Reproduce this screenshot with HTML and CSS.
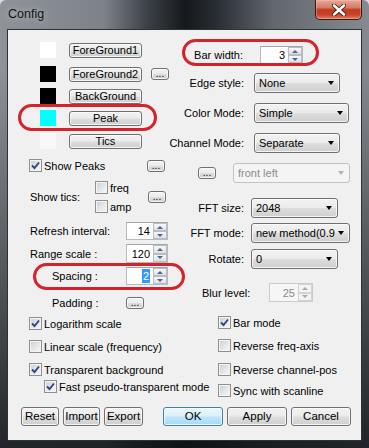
FILE: index.html
```html
<!DOCTYPE html>
<html lang="en">
<head>
    <meta charset="UTF-8">
    <title>Config</title>
    <link rel="stylesheet" href="styles.css">
</head>
<body>
    <div class="window">
        <div class="titlebar">
            <span class="title">Config</span>
            <div class="close-button">
                <svg width="14" height="12" viewBox="0 0 14 12">
                    <path d="M2 1.5 L12 10.5 M12 1.5 L2 10.5" stroke="#3a1208" stroke-width="4.2" stroke-linecap="round"/>
                    <path d="M2 1.5 L12 10.5 M12 1.5 L2 10.5" stroke="#ffffff" stroke-width="2.6" stroke-linecap="round"/>
                </svg>
            </div>
        </div>

        <div class="client">
            <div class="columns">
                <!-- left side: colours, peaks, scales -->
                <div class="col col-left">
                    <div class="row color-row">
                        <span class="swatch sw-fg1"></span>
                        <div class="btn color-btn">ForeGround1</div>
                    </div>
                    <div class="row color-row mt8">
                        <span class="swatch sw-fg2"></span>
                        <div class="btn color-btn">ForeGround2</div>
                        <div class="btn dots">...</div>
                    </div>
                    <div class="row color-row mt6">
                        <span class="swatch sw-bg"></span>
                        <div class="btn color-btn">BackGround</div>
                    </div>
                    <div class="row color-row mt6">
                        <span class="swatch sw-peak"></span>
                        <div class="btn color-btn">Peak</div>
                    </div>
                    <div class="row color-row mt7">
                        <span class="swatch sw-tics"></span>
                        <div class="btn color-btn">Tics</div>
                    </div>

                    <div class="row check-row show-peaks mt10">
                        <label class="check-label peaks-label">
                            <span class="check on"><svg viewBox="0 0 11 11"><path d="M2 5.5 L4.5 8 L9 2.5"/></svg></span>
                            Show Peaks
                        </label>
                        <div class="btn dots">...</div>
                    </div>

                    <div class="row show-tics mt9">
                        <span class="tics-label">Show tics:</span>
                        <div class="tics-checks">
                            <label class="check-label"><span class="check"></span>freq</label>
                            <label class="check-label"><span class="check"></span>amp</label>
                        </div>
                        <div class="btn dots">...</div>
                    </div>

                    <div class="row spin-row mt9">
                        <span class="spin-label">Refresh interval:</span>
                        <div class="spin">
                            <span class="spin-value">14</span>
                            <span class="spin-arrows"><span class="up"></span><span class="down"></span></span>
                        </div>
                    </div>
                    <div class="row spin-row range-row mt4">
                        <span class="spin-label">Range scale :</span>
                        <div class="spin">
                            <span class="spin-value">120</span>
                            <span class="spin-arrows"><span class="up"></span><span class="down"></span></span>
                        </div>
                    </div>
                    <div class="row spin-row indent mt4">
                        <span class="spin-label">Spacing :</span>
                        <div class="spin">
                            <span class="spin-value"><span class="selection">2</span></span>
                            <span class="spin-arrows"><span class="up"></span><span class="down"></span></span>
                        </div>
                    </div>
                    <div class="row spin-row padding-row indent mt12">
                        <span class="spin-label">Padding :</span>
                        <div class="btn dots">...</div>
                    </div>

                    <label class="row check-row check-label mt8">
                        <span class="check on"><svg viewBox="0 0 11 11"><path d="M2 5.5 L4.5 8 L9 2.5"/></svg></span>
                        Logarithm scale
                    </label>
                    <label class="row check-row check-label mt10">
                        <span class="check"></span>
                        Linear scale (frequency)
                    </label>
                    <label class="row check-row check-label mt10">
                        <span class="check on"><svg viewBox="0 0 11 11"><path d="M2 5.5 L4.5 8 L9 2.5"/></svg></span>
                        Transparent background
                    </label>
                    <label class="row check-row check-label sub mt4">
                        <span class="check on"><svg viewBox="0 0 11 11"><path d="M2 5.5 L4.5 8 L9 2.5"/></svg></span>
                        Fast pseudo-transparent mode
                    </label>
                </div>

                <!-- right side: bars, modes, fft -->
                <div class="col col-right">
                    <div class="row bar-row">
                        <span class="field-label bar-label">Bar width:</span>
                        <div class="spin">
                            <span class="spin-value">3</span>
                            <span class="spin-arrows"><span class="up"></span><span class="down"></span></span>
                        </div>
                    </div>
                    <div class="row combo-row mt9">
                        <span class="field-label">Edge style:</span>
                        <div class="combo w86"><span>None</span><i class="arrow"></i></div>
                    </div>
                    <div class="row combo-row mt10">
                        <span class="field-label">Color Mode:</span>
                        <div class="combo w95"><span>Simple</span><i class="arrow"></i></div>
                    </div>
                    <div class="row combo-row mt10">
                        <span class="field-label">Channel Mode:</span>
                        <div class="combo w86"><span>Separate</span><i class="arrow"></i></div>
                    </div>
                    <div class="row channel-row mt10">
                        <div class="btn dots">...</div>
                        <div class="combo disabled w117"><span>front left</span><i class="arrow"></i></div>
                    </div>
                    <div class="row combo-row fft-row mt15">
                        <span class="field-label">FFT size:</span>
                        <div class="combo w87"><span>2048</span><i class="arrow"></i></div>
                    </div>
                    <div class="row combo-row fft-row mt5">
                        <span class="field-label">FFT mode:</span>
                        <div class="combo w99"><span>new method(0.9</span><i class="arrow"></i></div>
                    </div>
                    <div class="row combo-row fft-row mt6">
                        <span class="field-label">Rotate:</span>
                        <div class="combo w87"><span>0</span><i class="arrow"></i></div>
                    </div>
                    <div class="row blur-row mt14">
                        <span class="blur-label">Blur level:</span>
                        <div class="spin disabled">
                            <span class="spin-value">25</span>
                            <span class="spin-arrows"><span class="up"></span><span class="down"></span></span>
                        </div>
                    </div>
                    <label class="row check-row check-label mt14">
                        <span class="check on"><svg viewBox="0 0 11 11"><path d="M2 5.5 L4.5 8 L9 2.5"/></svg></span>
                        Bar mode
                    </label>
                    <label class="row check-row check-label mt10">
                        <span class="check"></span>
                        Reverse freq-axis
                    </label>
                    <label class="row check-row check-label mt11">
                        <span class="check"></span>
                        Reverse channel-pos
                    </label>
                    <label class="row check-row check-label mt8">
                        <span class="check"></span>
                        Sync with scanline
                    </label>
                </div>
            </div>

            <div class="actions">
                <div class="btn small-btn">Reset</div>
                <div class="btn small-btn">Import</div>
                <div class="btn small-btn">Export</div>
                <div class="btn big-btn default">OK</div>
                <div class="btn big-btn">Apply</div>
                <div class="btn big-btn">Cancel</div>
            </div>

            <!-- red marker rings drawn over the dialog -->
            <div class="marker marker-peak"></div>
            <div class="marker marker-bar"></div>
            <div class="marker marker-spacing"></div>
        </div>
    </div>
</body>
</html>
```

FILE: styles.css
```css
body {
    margin: 0;
    background-color: #dcdcdc;
    font-family: "Liberation Sans", Arial, sans-serif;
    font-size: 11px;
    color: #000;
}

.window {
    width: 369px;
    height: 448px;
    box-sizing: border-box;
    border-radius: 6px 6px 0 0;
    background:
        linear-gradient(to bottom, rgba(0, 0, 0, 0) 0%, rgba(0, 0, 0, 0) 15%, rgba(14, 17, 21, 0.85) 100%),
        linear-gradient(to right, #8e9399 0%, #7e838a 28%, #3c4147 40%, #15191d 50%, #262b31 58%, #62676d 74%, #868b91 100%);
    display: flex;
    flex-direction: column;
    overflow: hidden;
}

.titlebar {
    height: 29px;
    display: flex;
    align-items: flex-start;
}

.title {
    margin: 7px 0 0 8px;
    font-size: 12.5px;
    color: #111;
    text-shadow: 0 0 6px rgba(255, 255, 255, 0.55);
}

.close-button {
    margin-left: auto;
    margin-right: 7px;
    width: 47px;
    height: 20px;
    box-sizing: border-box;
    border: 1px solid #3d1710;
    border-top: none;
    border-radius: 0 0 5px 5px;
    background: linear-gradient(to bottom, #e7a798 0%, #d57b68 40%, #c3391f 52%, #c9442a 78%, #de8466 100%);
    box-shadow: inset 0 0 0 1px rgba(255, 210, 200, 0.35);
    display: flex;
    align-items: center;
    justify-content: center;
}

.client {
    position: relative;
    margin: 0 7px 7px 7px;
    height: 412px;
    box-sizing: border-box;
    border: 1px solid #2d3238;
    background-color: #f0f0f0;
}

.columns {
    display: flex;
    height: 377px;
}

.col {
    display: flex;
    flex-direction: column;
}

.col-left {
    width: 177px;
    padding-top: 12px;
}

.col-right {
    width: 176px;
    padding-top: 16px;
}

.row {
    display: flex;
    align-items: center;
    white-space: nowrap;
}

.mt4 { margin-top: 4px; }
.mt5 { margin-top: 5px; }
.mt6 { margin-top: 6px; }
.mt7 { margin-top: 7px; }
.mt8 { margin-top: 8px; }
.mt9 { margin-top: 9px; }
.mt10 { margin-top: 10px; }
.mt11 { margin-top: 11px; }
.mt12 { margin-top: 12px; }
.mt14 { margin-top: 14px; }
.mt15 { margin-top: 15px; }

/* buttons */
.btn {
    box-sizing: border-box;
    border: 1px solid #707070;
    border-radius: 3px;
    background: linear-gradient(to bottom, #f2f2f2 0%, #ebebeb 48%, #dddddd 52%, #cfcfcf 100%);
    box-shadow: inset 0 0 0 1px rgba(252, 252, 252, 0.8);
    display: flex;
    align-items: center;
    justify-content: center;
    line-height: 1;
}

.dots {
    width: 18px;
    height: 12px;
    align-items: flex-end;
    padding-bottom: 1px;
    font-size: 10px;
    line-height: 8px;
}

.color-row {
    height: 16px;
    padding-left: 32px;
}

.swatch {
    width: 16px;
    height: 16px;
}

.sw-fg1 { background-color: #ffffff; }
.sw-fg2 { background-color: #000000; }
.sw-bg { background-color: #000000; }
.sw-peak { background-color: #00ffff; }
.sw-tics { background-color: #f8f8f8; }

.color-btn {
    width: 73px;
    height: 15px;
    margin-left: 13px;
}

.color-row .dots {
    margin-left: 9px;
}

/* checkboxes */
.check-label {
    display: flex;
    align-items: center;
    gap: 2px;
}

.check-row {
    height: 13px;
    padding-left: 21px;
}

.check-row.sub {
    padding-left: 36px;
}

.check {
    width: 13px;
    height: 13px;
    box-sizing: border-box;
    border: 1px solid #8e8f8f;
    background: linear-gradient(135deg, #c9cdd2 0%, #e6e7e9 55%, #f8f8f8 100%);
    box-shadow: inset 0 0 0 1px #f4f4f4;
    flex-shrink: 0;
}

.check svg {
    display: block;
    width: 11px;
    height: 11px;
    fill: none;
    stroke: #2f4684;
    stroke-width: 1.9;
}

.peaks-label {
    width: 118px;
}

.show-tics {
    height: 32px;
    padding-left: 22px;
}

.tics-label {
    width: 65px;
}

.tics-checks {
    width: 53px;
    display: flex;
    flex-direction: column;
    gap: 6px;
}

/* spin boxes */
.spin-row {
    height: 18px;
    padding-left: 22px;
}

.range-row {
    height: 19px;
}

.spin-row.indent {
    padding-left: 44px;
}

.spin-label {
    width: 96px;
}

.indent .spin-label {
    width: 74px;
}

.padding-row {
    height: 12px;
}

.spin {
    width: 42px;
    height: 100%;
    box-sizing: border-box;
    border: 1px solid #b6b9bf;
    border-top-color: #a3a6ac;
    background-color: #ffffff;
    display: flex;
}

.spin-value {
    flex: 1;
    display: flex;
    align-items: center;
    justify-content: flex-end;
    padding-right: 3px;
}

.selection {
    background-color: #3399ff;
    color: #fff;
    padding: 1px 1px;
}

.spin-arrows {
    width: 14px;
    display: flex;
    flex-direction: column;
}

.spin-arrows span {
    flex: 1;
    box-sizing: border-box;
    border: 1px solid #b9bcc1;
    background: linear-gradient(to bottom, #f6f7f8, #dee1e5);
    display: flex;
    align-items: center;
    justify-content: center;
}

.spin-arrows .up::after,
.spin-arrows .down::after {
    content: "";
    border-left: 3px solid transparent;
    border-right: 3px solid transparent;
}

.spin-arrows .up::after {
    border-bottom: 3px solid #51648f;
}

.spin-arrows .down::after {
    border-top: 3px solid #51648f;
}

.spin.disabled {
    border-color: #c9cbce;
    background-color: #f6f6f6;
    color: #8a8a8a;
}

.spin.disabled .spin-arrows span {
    border-color: #d1d3d6;
    background: #f3f3f3;
}

.spin.disabled .up::after { border-bottom-color: #a8a8a8; }
.spin.disabled .down::after { border-top-color: #a8a8a8; }

/* right side */
.field-label {
    width: 59px;
    display: flex;
    justify-content: flex-end;
    flex-shrink: 0;
}

.combo-row {
    height: 20px;
}

.combo-row .combo {
    margin-left: 10px;
}

.fft-row .combo {
    margin-left: 7px;
}

.bar-row {
    height: 18px;
}

.bar-label {
    width: 58px;
    margin-right: 17px;
}

.bar-row .spin {
    width: 43px;
}

.combo {
    height: 20px;
    box-sizing: border-box;
    border: 1px solid #707070;
    border-radius: 3px;
    background: linear-gradient(to bottom, #f2f2f2 0%, #ebebeb 48%, #dddddd 52%, #cfcfcf 100%);
    box-shadow: inset 0 0 0 1px rgba(252, 252, 252, 0.8);
    display: flex;
    align-items: center;
    justify-content: space-between;
    padding: 0 5px 0 4px;
    overflow: hidden;
}

.combo .arrow {
    flex-shrink: 0;
    border-left: 3.5px solid transparent;
    border-right: 3.5px solid transparent;
    border-top: 4px solid #000;
    margin-left: 2px;
}

.combo.disabled {
    border-color: #c0c2c5;
    background: #f4f4f4;
    box-shadow: none;
    color: #8b8b8b;
}

.combo.disabled .arrow {
    border-top-color: #b3b3b3;
}

.w86 { width: 86px; }
.w87 { width: 87px; }
.w95 { width: 95px; }
.w99 { width: 99px; }
.w117 { width: 117px; }

.channel-row {
    height: 20px;
    padding-left: 13px;
}

.channel-row .combo {
    margin-left: 17px;
}

.blur-row {
    height: 19px;
    padding-left: 17px;
}

.blur-label {
    width: 67px;
}

.blur-row .spin {
    width: 44px;
}

.col-right .check-row {
    padding-left: 33px;
}

/* bottom buttons */
.actions {
    display: flex;
    height: 19px;
    padding-left: 13px;
}

.small-btn {
    width: 38px;
    height: 19px;
    margin-right: 4px;
    font-size: 11.5px;
}

.small-btn:nth-child(2) {
    width: 37px;
    margin-right: 4px;
}

.small-btn:nth-child(3) {
    width: 39px;
    margin-right: 20px;
}

.big-btn {
    width: 60px;
    height: 19px;
    margin-right: 4px;
    font-size: 11.5px;
}

.big-btn.default {
    border-color: #3c7fb1;
    background: linear-gradient(to bottom, #eaf6fd 0%, #d9f0fc 48%, #bee6fd 52%, #a7d9f5 100%);
}

/* red annotation rings */
.marker {
    position: absolute;
    box-sizing: border-box;
    border: 3px solid #d4232b;
    border-radius: 14px;
}

.marker-peak {
    left: 10px;
    top: 74px;
    width: 139px;
    height: 27px;
}

.marker-bar {
    left: 174px;
    top: 9px;
    width: 137px;
    height: 27px;
}

.marker-spacing {
    left: 25px;
    top: 233px;
    width: 152px;
    height: 27px;
}
```
